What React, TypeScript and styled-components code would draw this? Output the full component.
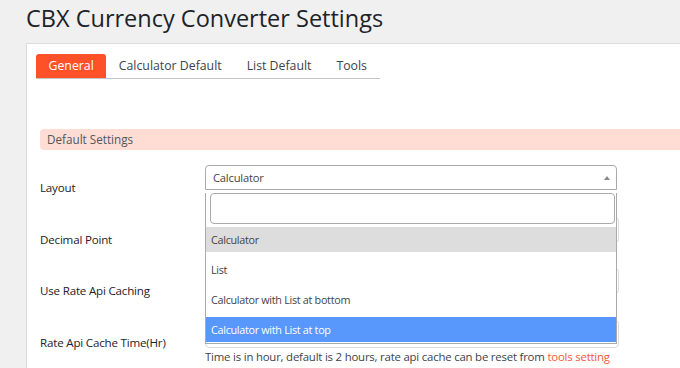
import * as React from 'react';
import styled, { createGlobalStyle } from 'styled-components';

const colors = {
  page: '#f0f0f1',
  text: '#1d2327',
  muted: '#50575e',
  border: '#c3c4c7',
  accent: '#ff5129',
  accentSoft: '#ffddd5',
  link: '#f4593b',
  selectBorder: '#aaaaaa',
  highlight: '#dddddd',
  active: '#5897fb'
};

const GlobalStyle = createGlobalStyle`
  html, body {
    margin: 0;
    padding: 0;
    background: ${colors.page};
    font-family: 'Open Sans', 'Noto Sans', sans-serif;
    color: ${colors.text};
    overflow: hidden;
  }
`;

const Page = styled.div`
  padding-left: 26px;
  height: 368px;
  overflow: hidden;
`;

const Title = styled.h1`
  margin: 0;
  padding: 2px 0 0;
  height: 41px;
  font-size: 23.5px;
  font-weight: 400;
  line-height: 32px;
  color: ${colors.text};
  white-space: nowrap;
`;

const Panel = styled.div`
  background: #fff;
  border-top: 1px solid #dcdcde;
  border-left: 1px solid #dcdcde;
  padding: 9px 0 0 9px;
  height: 320px;
`;

const TabBar = styled.div`
  display: inline-flex;
  border-bottom: 1px solid ${colors.border};
`;

const Tab = styled.div<{ $active?: boolean }>`
  height: 24px;
  padding: 0 12.5px;
  font-size: 12.3px;
  line-height: 24px;
  white-space: nowrap;
  border-radius: 3px 3px 0 0;
  color: ${p => (p.$active ? '#fff' : '#3c434a')};
  background: ${p => (p.$active ? colors.accent : 'transparent')};
`;

const SectionTitle = styled.div`
  margin: 50px 0 0 4px;
  height: 21px;
  padding-left: 7px;
  border-radius: 4px 0 0 4px;
  background: ${colors.accentSoft};
  color: ${colors.muted};
  font-size: 11.7px;
  line-height: 21px;
`;

const Form = styled.div`
  margin: 5px 0 0 4px;
  position: relative;
`;

const Row = styled.div`
  display: grid;
  grid-template-columns: 165px 414px;
  height: 51.5px;
`;

const Label = styled.div`
  padding-top: 24px;
  font-size: 11.6px;
  letter-spacing: -0.2px;
  line-height: 18px;
  color: ${colors.text};
  white-space: nowrap;
`;

const Field = styled.div`
  padding-top: 10px;
`;

const Input = styled.div<{ $tall?: boolean }>`
  height: ${p => (p.$tall ? 26 : 24)}px;
  border: 1px solid #dcdcde;
  border-radius: 4px;
  background: #fff;
`;

const Help = styled.div`
  font-size: 11.4px;
  letter-spacing: -0.2px;
  line-height: 17px;
  color: #3c434a;
  white-space: nowrap;

  a {
    color: ${colors.link};
    text-decoration: none;
  }
`;

const Dropdown = styled.div`
  position: absolute;
  top: 10px;
  left: 165px;
  width: 412px;
  font-size: 10.8px;
  letter-spacing: -0.3px;
  color: #444;
`;

const SelectBox = styled.div`
  position: relative;
  height: 23px;
  border: 1px solid ${colors.selectBorder};
  border-radius: 4px 4px 0 0;
  background: #fff;
  padding-left: 7px;
  font-size: 11.2px;
  letter-spacing: -0.2px;
  line-height: 23px;
`;

const Arrow = styled.span`
  position: absolute;
  right: 6px;
  top: 10px;
  width: 0;
  height: 0;
  border-left: 3.5px solid transparent;
  border-right: 3.5px solid transparent;
  border-bottom: 4px solid #888;
`;

const Menu = styled.div`
  border: 1px solid ${colors.selectBorder};
  border-top: none;
  background: #fff;
  padding-bottom: 1px;
`;

const Search = styled.div`
  margin: 3px 1px 3px 4px;
  height: 29px;
  border: 1px solid ${colors.selectBorder};
  border-radius: 4px;
`;

const Options = styled.div`
  display: flex;
  flex-direction: column;
  gap: 5px;
`;

const Option = styled.div<{ $state?: 'hover' | 'active' }>`
  height: 25px;
  padding-left: 5px;
  line-height: 25px;
  white-space: nowrap;
  background: ${p =>
    p.$state === 'hover' ? colors.highlight : p.$state === 'active' ? colors.active : '#fff'};
  color: ${p => (p.$state === 'active' ? '#fff' : '#444')};
`;

const tabs = ['General', 'Calculator Default', 'List Default', 'Tools'];
const rows = ['Layout', 'Decimal Point', 'Use Rate Api Caching', 'Rate Api Cache Time(Hr)'];
const options: { label: string; state?: 'hover' | 'active' }[] = [
  { label: 'Calculator', state: 'hover' },
  { label: 'List' },
  { label: 'Calculator with List at bottom' },
  { label: 'Calculator with List at top', state: 'active' }
];

export default function App() {
  return (
    <Page>
      <GlobalStyle />
      <Title>CBX Currency Converter Settings</Title>
      <Panel>
        <TabBar>
          {tabs.map((t, i) => (
            <Tab key={t} $active={i === 0}>
              {t}
            </Tab>
          ))}
        </TabBar>
        <SectionTitle>Default Settings</SectionTitle>
        <Form>
          {rows.map((label, i) => (
            <Row key={label}>
              <Label>{label}</Label>
              <Field>
                {i > 0 && <Input $tall={i === 3} />}
                {i === 3 && (
                  <Help>
                    Time is in hour, default is 2 hours, rate api cache can be reset from{' '}
                    <a href="#">tools setting</a>
                  </Help>
                )}
              </Field>
            </Row>
          ))}
          <Dropdown>
            <SelectBox>
              Calculator
              <Arrow />
            </SelectBox>
            <Menu>
              <Search />
              <Options>
                {options.map(o => (
                  <Option key={o.label} $state={o.state}>
                    {o.label}
                  </Option>
                ))}
              </Options>
            </Menu>
          </Dropdown>
        </Form>
      </Panel>
    </Page>
  );
}
